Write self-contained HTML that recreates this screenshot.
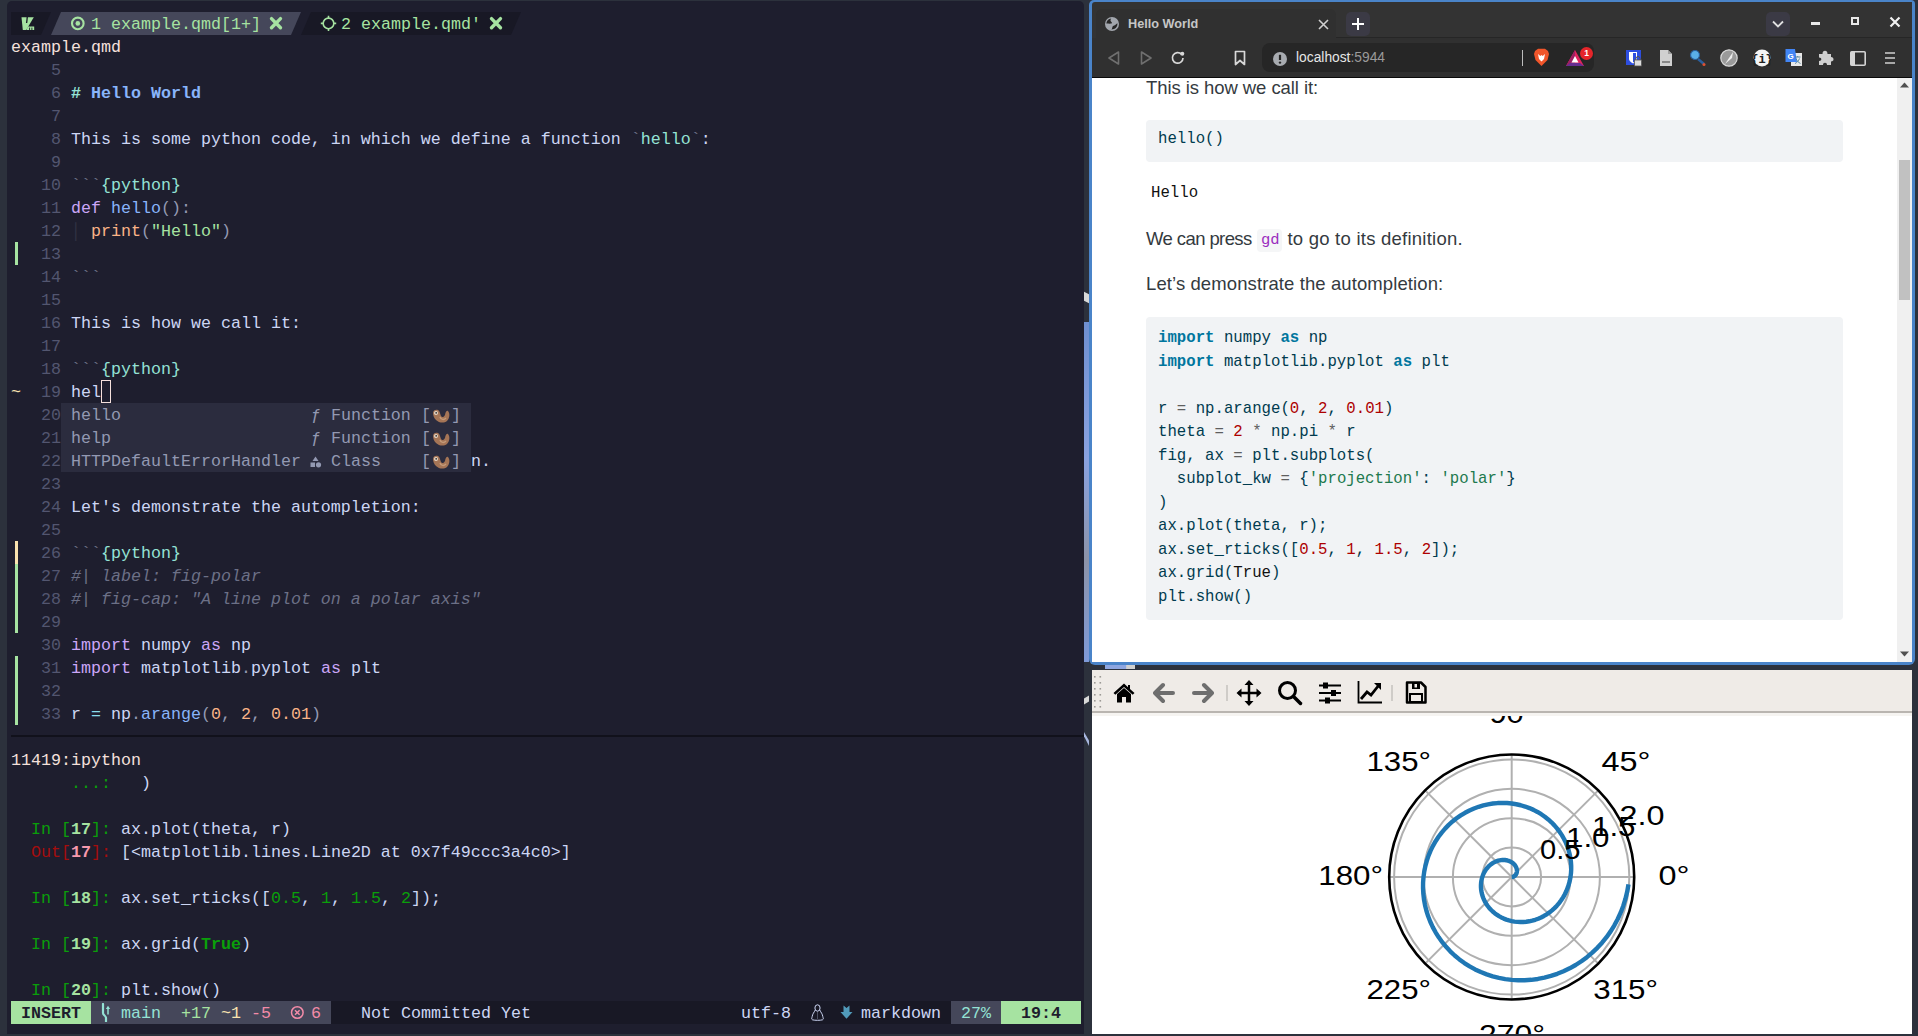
<!DOCTYPE html>
<html><head><meta charset="utf-8"><style>
html,body{margin:0;padding:0;}
body{width:1918px;height:1036px;position:relative;overflow:hidden;background:#2c313c;font-family:"Liberation Sans",sans-serif;}
.r{position:absolute;height:23px;line-height:23px;white-space:pre;font-family:"Liberation Mono",monospace;font-size:16.67px;color:#cdd6f4;}
</style></head><body>
<div id="term" style="position:absolute;left:7px;top:1px;width:1077px;height:1033px;background:#1e1e2e;border-radius:5px 5px 0 0;"></div>
<div style="position:absolute;left:11px;top:12px;width:30px;height:23px;background:#181825;"></div><svg style="position:absolute;left:41px;top:12px" width="10" height="23"><polygon points="0,0 10,0 0,23" fill="#181825"/></svg><svg style="position:absolute;left:51px;top:12px" width="10" height="23"><polygon points="10,0 10,23 0,23" fill="#45475a"/></svg><div style="position:absolute;left:61px;top:12px;width:230px;height:23px;background:#45475a;"></div><svg style="position:absolute;left:291px;top:12px" width="10" height="23"><polygon points="0,0 10,0 0,23" fill="#45475a"/></svg><svg style="position:absolute;left:301px;top:12px" width="10" height="23"><polygon points="10,0 10,23 0,23" fill="#181825"/></svg><div style="position:absolute;left:311px;top:12px;width:200px;height:23px;background:#181825;"></div><svg style="position:absolute;left:511px;top:12px" width="10" height="23"><polygon points="0,0 10,0 0,23" fill="#181825"/></svg><div class="r" style="top:13px;left:91px;"><span style="color:#a6e3a1;">1 example.qmd[1+]</span></div><div class="r" style="top:13px;left:341px;"><span style="color:#a6e3a1;">2 example.qmd&#x27;</span></div><svg style="position:absolute;left:70px;top:16px" width="16" height="16" viewBox="0 0 16 16"><circle cx="7.8" cy="7.4" r="5.8" fill="none" stroke="#a6e3a1" stroke-width="2.1"/><circle cx="7.8" cy="7.4" r="2.3" fill="#a6e3a1"/></svg><svg style="position:absolute;left:320px;top:15px" width="17" height="17" viewBox="0 0 17 17"><circle cx="8.5" cy="8.4" r="5.3" fill="none" stroke="#a6e3a1" stroke-width="1.6"/><path d="M8.5 0.8 V3.2 M8.5 13.6 V16 M0.8 8.4 H3.2 M13.8 8.4 H16.2" stroke="#a6e3a1" stroke-width="1.6"/></svg><svg style="position:absolute;left:269px;top:16px" width="14" height="15" viewBox="0 0 14 15"><path d="M2.5 2.6 L11.5 11.8 M11.5 2.6 L2.5 11.8" stroke="#a6e3a1" stroke-width="3.4" stroke-linecap="round"/></svg><svg style="position:absolute;left:489px;top:16px" width="14" height="15" viewBox="0 0 14 15"><path d="M2.5 2.6 L11.5 11.8 M11.5 2.6 L2.5 11.8" stroke="#a6e3a1" stroke-width="3.4" stroke-linecap="round"/></svg><svg style="position:absolute;left:21px;top:17px" width="14" height="14" viewBox="0 0 14 14"><path d="M0.5 0.3 H12.8 L5.2 13 H1.8 Z" fill="#a6e3a1"/><path d="M6.3 0 L5.6 6" stroke="#181825" stroke-width="1.3"/><path d="M6.8 9.6 H13.2 V13 H5.5 Z" fill="#a6e3a1"/><path d="M8.6 10.6 V13 M10.9 10.6 V13" stroke="#181825" stroke-width="0.9"/></svg><div class="r" style="top:36px;left:11px;"><span style="color:#f5e0dc;">example.qmd</span></div><div class="r" style="top:59px;left:11px;"><span style="color:#535670;">    5 </span></div><div class="r" style="top:82px;left:11px;"><span style="color:#535670;">    6 </span><span style="color:#94e2d5;font-weight:bold"># </span><span style="color:#89b4fa;font-weight:bold">Hello World</span></div><div class="r" style="top:105px;left:11px;"><span style="color:#535670;">    7 </span></div><div class="r" style="top:128px;left:11px;"><span style="color:#535670;">    8 </span><span style="color:#cdd6f4;">This is some python code, in which we define a function </span><span style="color:#6c7086;">`</span><span style="color:#94e2d5;">hello</span><span style="color:#6c7086;">`</span><span style="color:#cdd6f4;">:</span></div><div class="r" style="top:151px;left:11px;"><span style="color:#535670;">    9 </span></div><div class="r" style="top:174px;left:11px;"><span style="color:#535670;">   10 </span><span style="color:#6c7086;">```</span><span style="color:#94e2d5;">{python}</span></div><div class="r" style="top:197px;left:11px;"><span style="color:#535670;">   11 </span><span style="color:#cba6f7;">def</span> <span style="color:#89b4fa;">hello</span><span style="color:#9399b2;">():</span></div><div class="r" style="top:220px;left:11px;"><span style="color:#535670;">   12 </span><span style="color:#313244;">│</span> <span style="color:#fab387;">print</span><span style="color:#9399b2;">(</span><span style="color:#a6e3a1;">&quot;Hello&quot;</span><span style="color:#9399b2;">)</span></div><div class="r" style="top:243px;left:11px;"><span style="color:#535670;">   13 </span></div><div class="r" style="top:266px;left:11px;"><span style="color:#535670;">   14 </span><span style="color:#6c7086;">```</span></div><div class="r" style="top:289px;left:11px;"><span style="color:#535670;">   15 </span></div><div class="r" style="top:312px;left:11px;"><span style="color:#535670;">   16 </span><span style="color:#cdd6f4;">This is how we call it:</span></div><div class="r" style="top:335px;left:11px;"><span style="color:#535670;">   17 </span></div><div class="r" style="top:358px;left:11px;"><span style="color:#535670;">   18 </span><span style="color:#6c7086;">```</span><span style="color:#94e2d5;">{python}</span></div><div class="r" style="top:381px;left:11px;"><span style="color:#535670;">   19 </span><span style="color:#cdd6f4;">hel</span></div><div class="r" style="top:473px;left:11px;"><span style="color:#535670;">   23 </span></div><div class="r" style="top:496px;left:11px;"><span style="color:#535670;">   24 </span><span style="color:#cdd6f4;">Let&#x27;s demonstrate the autompletion:</span></div><div class="r" style="top:519px;left:11px;"><span style="color:#535670;">   25 </span></div><div class="r" style="top:542px;left:11px;"><span style="color:#535670;">   26 </span><span style="color:#6c7086;">```</span><span style="color:#94e2d5;">{python}</span></div><div class="r" style="top:565px;left:11px;"><span style="color:#535670;">   27 </span><span style="color:#6c7086;font-style:italic">#| label: fig-polar</span></div><div class="r" style="top:588px;left:11px;"><span style="color:#535670;">   28 </span><span style="color:#6c7086;font-style:italic">#| fig-cap: &quot;A line plot on a polar axis&quot;</span></div><div class="r" style="top:611px;left:11px;"><span style="color:#535670;">   29 </span></div><div class="r" style="top:634px;left:11px;"><span style="color:#535670;">   30 </span><span style="color:#cba6f7;">import</span><span style="color:#cdd6f4;"> numpy </span><span style="color:#cba6f7;">as</span><span style="color:#cdd6f4;"> np</span></div><div class="r" style="top:657px;left:11px;"><span style="color:#535670;">   31 </span><span style="color:#cba6f7;">import</span><span style="color:#cdd6f4;"> matplotlib</span><span style="color:#9399b2;">.</span><span style="color:#cdd6f4;">pyplot </span><span style="color:#cba6f7;">as</span><span style="color:#cdd6f4;"> plt</span></div><div class="r" style="top:680px;left:11px;"><span style="color:#535670;">   32 </span></div><div class="r" style="top:703px;left:11px;"><span style="color:#535670;">   33 </span><span style="color:#cdd6f4;">r </span><span style="color:#89dceb;">=</span><span style="color:#cdd6f4;"> np</span><span style="color:#9399b2;">.</span><span style="color:#89b4fa;">arange</span><span style="color:#9399b2;">(</span><span style="color:#fab387;">0</span><span style="color:#9399b2;">, </span><span style="color:#fab387;">2</span><span style="color:#9399b2;">, </span><span style="color:#fab387;">0.01</span><span style="color:#9399b2;">)</span></div><div class="r" style="top:450px;left:471px;"><span style="color:#cdd6f4;">n.</span></div><div class="r" style="top:450px;left:11px;"><span style="color:#535670;">   22 </span></div><div class="r" style="top:404px;left:11px;"><span style="color:#535670;">   20 </span></div><div class="r" style="top:427px;left:11px;"><span style="color:#535670;">   21 </span></div><div style="position:absolute;left:15px;top:242px;width:3px;height:23px;background:#a6e3a1;"></div><div style="position:absolute;left:15px;top:541px;width:3px;height:23px;background:#f9e2af;"></div><div style="position:absolute;left:15px;top:564px;width:3px;height:69px;background:#a6e3a1;"></div><div style="position:absolute;left:15px;top:656px;width:3px;height:69px;background:#a6e3a1;"></div><div class="r" style="top:381px;left:11px;"><span style="color:#f9e2af;">~</span></div><div style="position:absolute;left:61px;top:403px;width:410px;height:69px;background:#2b2c3e;"></div><div class="r" style="top:404px;left:71px;"><span style="color:#9399b2;">hello</span>                   <span style="color:#9399b2;">ƒ</span><span style="color:#9399b2;"> Function </span><span style="color:#9399b2;">[</span>  <span style="color:#9399b2;">]</span></div><div class="r" style="top:427px;left:71px;"><span style="color:#9399b2;">help</span>                    <span style="color:#9399b2;">ƒ</span><span style="color:#9399b2;"> Function </span><span style="color:#9399b2;">[</span>  <span style="color:#9399b2;">]</span></div><div class="r" style="top:450px;left:71px;"><span style="color:#9399b2;">HTTPDefaultErrorHandler</span>  <span style="color:#9399b2;"> Class    </span><span style="color:#9399b2;">[</span>  <span style="color:#9399b2;">]</span></div><svg style="position:absolute;left:431px;top:408px" width="20" height="16" viewBox="0 0 20 16"><path d="M2 5 C2 2 5 1 7 2 C9 3 9 6 10 8 C11 10 13 9 14 7 C14.5 5 15 2 17 3 C19 5 19 10 16 13 C13 15.5 8 15 5 12 C3 10 2 7.5 2 5 Z" fill="#a57556"/><circle cx="5" cy="5" r="2" fill="#e8d8c8"/><circle cx="5.2" cy="4.8" r="0.9" fill="#333"/><path d="M9 9 C10 12 13 12 15 10" stroke="#c49a78" stroke-width="1.5" fill="none"/></svg><svg style="position:absolute;left:431px;top:431px" width="20" height="16" viewBox="0 0 20 16"><path d="M2 5 C2 2 5 1 7 2 C9 3 9 6 10 8 C11 10 13 9 14 7 C14.5 5 15 2 17 3 C19 5 19 10 16 13 C13 15.5 8 15 5 12 C3 10 2 7.5 2 5 Z" fill="#a57556"/><circle cx="5" cy="5" r="2" fill="#e8d8c8"/><circle cx="5.2" cy="4.8" r="0.9" fill="#333"/><path d="M9 9 C10 12 13 12 15 10" stroke="#c49a78" stroke-width="1.5" fill="none"/></svg><svg style="position:absolute;left:431px;top:454px" width="20" height="16" viewBox="0 0 20 16"><path d="M2 5 C2 2 5 1 7 2 C9 3 9 6 10 8 C11 10 13 9 14 7 C14.5 5 15 2 17 3 C19 5 19 10 16 13 C13 15.5 8 15 5 12 C3 10 2 7.5 2 5 Z" fill="#a57556"/><circle cx="5" cy="5" r="2" fill="#e8d8c8"/><circle cx="5.2" cy="4.8" r="0.9" fill="#333"/><path d="M9 9 C10 12 13 12 15 10" stroke="#c49a78" stroke-width="1.5" fill="none"/></svg><svg style="position:absolute;left:310px;top:456px" width="12" height="12" viewBox="0 0 12 12"><path d="M5.5 0.5 L8.5 5 H2.5 Z" fill="#9399b2"/><rect x="0.5" y="6.5" width="4.5" height="4.5" fill="#9399b2"/><circle cx="8.5" cy="8.8" r="2.6" fill="#9399b2"/></svg><div style="position:absolute;left:101px;top:380px;width:10px;height:23px;background:transparent;box-sizing:border-box;border:1.5px solid #f5e0dc"></div><div style="position:absolute;left:11px;top:735px;width:1073px;height:2px;background:#11111b;"></div><div class="r" style="top:749px;left:11px;"><span style="color:#f5e0dc;">11419:ipython</span></div><div class="r" style="top:772px;left:11px;">      <span style="color:#0a9f0a;">...:</span><span style="color:#cdd6f4;">   )</span></div><div class="r" style="top:818px;left:11px;">  <span style="color:#0a9f0a;">In [</span><span style="color:#a6e3a1;font-weight:bold">17</span><span style="color:#0a9f0a;">]: </span><span style="color:#cdd6f4;">ax.plot(theta, r)</span></div><div class="r" style="top:841px;left:11px;">  <span style="color:#a50d0d;">Out[</span><span style="color:#f799ad;font-weight:bold">17</span><span style="color:#a50d0d;">]: </span><span style="color:#cdd6f4;">[&lt;matplotlib.lines.Line2D at 0x7f49ccc3a4c0&gt;]</span></div><div class="r" style="top:887px;left:11px;">  <span style="color:#0a9f0a;">In [</span><span style="color:#a6e3a1;font-weight:bold">18</span><span style="color:#0a9f0a;">]: </span><span style="color:#cdd6f4;">ax.set_rticks([</span><span style="color:#0a9f0a;">0.5</span><span style="color:#cdd6f4;">, </span><span style="color:#0a9f0a;">1</span><span style="color:#cdd6f4;">, </span><span style="color:#0a9f0a;">1.5</span><span style="color:#cdd6f4;">, </span><span style="color:#0a9f0a;">2</span><span style="color:#cdd6f4;">]);</span></div><div class="r" style="top:933px;left:11px;">  <span style="color:#0a9f0a;">In [</span><span style="color:#a6e3a1;font-weight:bold">19</span><span style="color:#0a9f0a;">]: </span><span style="color:#cdd6f4;">ax.grid(</span><span style="color:#0a9f0a;font-weight:bold">True</span><span style="color:#cdd6f4;">)</span></div><div class="r" style="top:979px;left:11px;">  <span style="color:#0a9f0a;">In [</span><span style="color:#a6e3a1;font-weight:bold">20</span><span style="color:#0a9f0a;">]: </span><span style="color:#cdd6f4;">plt.show()</span></div><div style="position:absolute;left:11px;top:1001px;width:1070px;height:23px;background:#181825;"></div><div style="position:absolute;left:11px;top:1001px;width:80px;height:23px;background:#a6e3a1;"></div><div style="position:absolute;left:91px;top:1001px;width:240px;height:23px;background:#45475a;"></div><div style="position:absolute;left:951px;top:1001px;width:50px;height:23px;background:#45475a;"></div><div style="position:absolute;left:1001px;top:1001px;width:80px;height:23px;background:#a6e3a1;"></div><div class="r" style="top:1002px;left:21px;"><span style="color:#1e1e2e;font-weight:bold">INSERT</span></div><div class="r" style="top:1002px;left:121px;"><span style="color:#94e2d5;">main</span></div><div class="r" style="top:1002px;left:181px;"><span style="color:#a6e3a1;">+17</span></div><div class="r" style="top:1002px;left:221px;"><span style="color:#f9e2af;">~1</span></div><div class="r" style="top:1002px;left:251px;"><span style="color:#f38ba8;">-5</span></div><div class="r" style="top:1002px;left:311px;"><span style="color:#f38ba8;">6</span></div><svg style="position:absolute;left:290px;top:1005px" width="15" height="15" viewBox="0 0 15 15"><circle cx="7.3" cy="7.5" r="5.8" fill="none" stroke="#f38ba8" stroke-width="1.5"/><path d="M5 5.2 L9.6 9.8 M9.6 5.2 L5 9.8" stroke="#f38ba8" stroke-width="1.5"/></svg><svg style="position:absolute;left:100px;top:1003px" width="11" height="19" viewBox="0 0 11 19"><path d="M3 1 V10 C3 12.5 6 12.5 6 15 V18.5" stroke="#94e2d5" stroke-width="2.2" fill="none" stroke-linecap="round"/><path d="M8 5 V11.5" stroke="#94e2d5" stroke-width="1.5"/><path d="M8 2.8 L5.8 6 H10.2 Z" fill="#94e2d5"/></svg><svg style="position:absolute;left:810px;top:1004px" width="15" height="17" viewBox="0 0 15 17"><ellipse cx="7.5" cy="4" rx="2.6" ry="3.2" fill="none" stroke="#cdd6f4" stroke-width="1"/><path d="M5.3 6 C4 8.5 2.5 10 2.2 12.5 C2 14 1 15 2.5 15.8 C4.5 16.5 10.5 16.5 12.5 15.8 C14 15 13 14 12.8 12.5 C12.5 10 11 8.5 9.7 6" fill="none" stroke="#cdd6f4" stroke-width="1"/><path d="M7.5 7.5 V15" stroke="#cdd6f4" stroke-width="0.6" opacity="0.5"/></svg><svg style="position:absolute;left:840px;top:1005px" width="13" height="15" viewBox="0 0 13 15"><path d="M3.5 0.5 L6.5 3 L9.5 0.5 V7 H12.5 L6.5 13.8 L0.5 7 H3.5 Z" fill="#519aba"/></svg><div class="r" style="top:1002px;left:361px;"><span style="color:#cdd6f4;">Not Committed Yet</span></div><div class="r" style="top:1002px;left:741px;"><span style="color:#cdd6f4;">utf-8</span></div><div class="r" style="top:1002px;left:861px;"><span style="color:#cdd6f4;">markdown</span></div><div class="r" style="top:1002px;left:961px;"><span style="color:#94e2d5;">27%</span></div><div class="r" style="top:1002px;left:1021px;"><span style="color:#1e1e2e;font-weight:bold">19:4</span></div>
<div style="position:absolute;left:1084px;top:322px;width:5px;height:340px;background:linear-gradient(#6f8fd0,#8aa2e0 40%,#8c93a8 70%,#7f9ad8);"></div>
<div style="position:absolute;left:1084px;top:293px;width:5px;height:9px;background:#d8d8d8;transform:skewY(25deg);"></div>
<div style="position:absolute;left:1105px;top:665px;width:30px;height:4px;background:linear-gradient(90deg,#8ea6e0 70%,#d0d0d0 72%);"></div>
<div style="position:absolute;left:1084px;top:697px;width:5px;height:6px;background:#d8d8d8;transform:skewY(-30deg);"></div>
<div style="position:absolute;left:1084px;top:732px;width:5px;height:14px;background:#a9b8e0;clip-path:polygon(0 0,100% 60%,100% 100%,0 30%);"></div>
<div style="position:absolute;left:1089px;top:0px;width:826px;height:665px;background:#4a84c9;border-radius:5px 4px 6px 6px;"></div><div style="position:absolute;left:1092px;top:2px;width:820px;height:660px;background:#333333;border-radius:3px 0 4px 4px;overflow:hidden;"></div><div style="position:absolute;left:1096px;top:9px;width:240px;height:29px;background:#303030;border-radius:6px 6px 0 0;"></div><div style="position:absolute;left:1092px;top:38px;width:820px;height:39px;background:#303030;"></div><div style="position:absolute;left:1336px;top:37px;width:576px;height:1px;background:#262626;"></div><div style="position:absolute;left:1092px;top:77px;width:820px;height:1px;background:#0a0a0a;"></div><svg style="position:absolute;left:1104px;top:16px" width="16" height="16" viewBox="0 0 16 16"><circle cx="8" cy="8" r="7" fill="#a2a6ad"/><path d="M2.3 7.6 C2.5 4.8 4.5 2.8 7.3 2.5 C6.3 3.5 6.2 4.8 7.2 5.8 C8 6.6 8.3 7.2 7.5 7.6 C6 7.9 4 7.6 2.3 7.6 Z" fill="#262626"/><path d="M7.3 13.5 C8.3 12.8 8.2 11.5 8.6 10.5 C9.2 9.8 10.8 9.5 11.8 8.5 C12.4 8 12.9 7.6 13.4 7.3 C13.8 10.8 11 13.6 7.3 13.5 Z" fill="#262626"/></svg><div style="position:absolute;left:1128px;top:16px;font:bold 12.7px 'Liberation Sans',sans-serif;color:#c6c6c6;line-height:16px;">Hello World</div><svg style="position:absolute;left:1318px;top:19px" width="11" height="11" viewBox="0 0 11 11"><path d="M1 1 L10 10 M10 1 L1 10" stroke="#d0d0d0" stroke-width="1.6"/></svg><div style="position:absolute;left:1346px;top:12px;width:24px;height:24px;background:#3b3a45;border-radius:5px;"></div><svg style="position:absolute;left:1351px;top:17px" width="14" height="14" viewBox="0 0 14 14"><path d="M7 1 V13 M1 7 H13" stroke="#fff" stroke-width="2"/></svg><div style="position:absolute;left:1766px;top:12px;width:24px;height:24px;background:#3b3a45;border-radius:5px;"></div><svg style="position:absolute;left:1770px;top:18px" width="16" height="12" viewBox="0 0 16 12"><path d="M3 3.5 L8 8.5 L13 3.5" stroke="#e0e0e0" stroke-width="1.8" fill="none"/></svg><div style="position:absolute;left:1811px;top:22px;width:9px;height:2.5px;background:#e8e8e8;"></div><div style="position:absolute;left:1851px;top:17px;width:8px;height:8px;border:2px solid #e8e8e8;box-sizing:border-box;"></div><svg style="position:absolute;left:1889px;top:16px" width="12" height="12" viewBox="0 0 12 12"><path d="M1.5 1.5 L10.5 10.5 M10.5 1.5 L1.5 10.5" stroke="#f0f0f0" stroke-width="2.2"/></svg><svg style="position:absolute;left:1106px;top:50px" width="16" height="16" viewBox="0 0 16 16"><path d="M12.5 2 L3 8 L12.5 14 Z" stroke="#6f6f6f" stroke-width="1.6" fill="none" stroke-linejoin="round"/></svg><svg style="position:absolute;left:1138px;top:50px" width="16" height="16" viewBox="0 0 16 16"><path d="M3.5 2 L13 8 L3.5 14 Z" stroke="#6f6f6f" stroke-width="1.6" fill="none" stroke-linejoin="round"/></svg><svg style="position:absolute;left:1170px;top:50px" width="16" height="16" viewBox="0 0 16 16"><path d="M13 8 A5.3 5.3 0 1 1 11.5 4.2" stroke="#d8d8d8" stroke-width="1.7" fill="none"/><circle cx="12.3" cy="3.8" r="2" fill="#d8d8d8"/></svg><svg style="position:absolute;left:1232px;top:50px" width="16" height="16" viewBox="0 0 16 16"><path d="M3.5 1.5 H12.5 V14.5 L8 10.5 L3.5 14.5 Z" stroke="#d8d8d8" stroke-width="1.7" fill="none" stroke-linejoin="round"/></svg><div style="position:absolute;left:1262px;top:43px;width:332px;height:29px;background:#262626;border-radius:8px;"></div><svg style="position:absolute;left:1272px;top:51px" width="16" height="16" viewBox="0 0 16 16"><circle cx="8" cy="8" r="7" fill="#a8abb0"/><path d="M8 3.8 V9" stroke="#262626" stroke-width="2.2"/><circle cx="8" cy="11.6" r="1.2" fill="#262626"/></svg><div style="position:absolute;left:1296px;top:49px;font:13.8px 'Liberation Sans',sans-serif;line-height:18px;color:#e6e6e6;white-space:pre;">localhost<span style="color:#9a9a9a">:5944</span></div><div style="position:absolute;left:1522px;top:50px;width:1px;height:16px;background:#bdbdbd;"></div><svg style="position:absolute;left:1533px;top:48px" width="17" height="19" viewBox="0 0 17 19"><path d="M2 3 L5 0.8 H12 L15 3 L16 6 L14.5 12 L8.5 18 L2.5 12 L1 6 Z" fill="#f1562b"/><path d="M5 6 L7.3 8 L8.5 7 L9.7 8 L12 6 L11 11 L8.5 13.5 L6 11 Z" fill="#fff"/></svg><svg style="position:absolute;left:1566px;top:49px" width="20" height="18" viewBox="0 0 20 18"><path d="M9 1 L18 17 H0 Z" fill="#e0245e"/><path d="M0 17 L9 1 L9 17 Z" fill="#9e1f63"/><path d="M0 17 H18 L14 14 H4 Z" fill="#662d91"/><path d="M9 7 L12.5 13.5 H5.5 Z" fill="#fff"/></svg><div style="position:absolute;left:1580px;top:47px;width:13px;height:13px;border-radius:50%;background:#e5252a;color:#fff;font:bold 8.5px 'Liberation Sans',sans-serif;text-align:center;line-height:13px;">1</div><svg style="position:absolute;left:1625px;top:49px" width="18" height="18" viewBox="0 0 18 18"><rect x="1" y="1" width="15" height="15" fill="#2d4ee0"/><path d="M4 3 H12 V10 C12 12 9 14 8 14.5 C7 14 4 12 4 10 Z" fill="#fff"/><path d="M8 4 H11 V10 C11 11.5 9 13 8 13.5 Z" fill="#2d4ee0"/><rect x="9.5" y="11" width="7" height="6" fill="#ddd" stroke="#555" stroke-width="0.8"/><path d="M11 11 V9.5 A2 2 0 0 1 15 9.5 V11" stroke="#555" fill="none"/></svg><svg style="position:absolute;left:1658px;top:49px" width="16" height="18" viewBox="0 0 16 18"><path d="M2 1 H10 L14 5 V17 H2 Z" fill="#d0d0d0"/><path d="M10 1 V5 H14" fill="#a0a0a0"/><rect x="4" y="12" width="8" height="2" fill="#888"/></svg><svg style="position:absolute;left:1689px;top:49px" width="18" height="18" viewBox="0 0 18 18"><circle cx="6" cy="6" r="4.5" fill="#5aaee8" stroke="#2a5f9e" stroke-width="1.2"/><path d="M9 10 L15 15" stroke="#2a5f9e" stroke-width="2.5"/><circle cx="15" cy="15.5" r="1.5" fill="#e05030"/></svg><svg style="position:absolute;left:1720px;top:49px" width="18" height="18" viewBox="0 0 18 18"><circle cx="9" cy="9" r="8.2" fill="#9a9a9a" stroke="#d8d8d8" stroke-width="1.2"/><path d="M5 15 L13 3 L12 9 Z" fill="#eeeeee"/></svg><svg style="position:absolute;left:1753px;top:49px" width="18" height="18" viewBox="0 0 18 18"><circle cx="9" cy="9" r="8.5" fill="#f4f4f4"/><text x="9" y="13.5" font-family="Liberation Mono" font-size="12" font-weight="bold" text-anchor="middle" fill="#222">{i}</text></svg><svg style="position:absolute;left:1785px;top:48px" width="18" height="19" viewBox="0 0 18 19"><rect x="6" y="5" width="11" height="13" fill="#e8e8e8"/><path d="M0.5 1 H10 L12 14 H0.5 Z" fill="#4285f4"/><text x="5.5" y="10.5" font-family="Liberation Sans" font-size="8" font-weight="bold" text-anchor="middle" fill="#fff">G</text><path d="M10 9 H15.5 M12.7 8 V9 M11 10.5 C12 13 13.5 14.5 15.5 15.5 M14.5 10.5 C13.5 13 12 14.5 10 15.5" stroke="#4a7f9a" stroke-width="0.9" fill="none"/></svg><svg style="position:absolute;left:1818px;top:50px" width="16" height="16" viewBox="0 0 16 16"><path d="M1 4 H4.5 C4.5 2 5.5 0.8 7 0.8 C8.5 0.8 9.5 2 9.5 4 H13 V7 C14.8 7 15.5 8 15.5 9.3 C15.5 10.6 14.8 11.5 13 11.5 V15 H9 C9 13.5 8.2 12.8 7 12.8 C5.8 12.8 5 13.5 5 15 H1 V11 C2.6 11 3.3 10.2 3.3 9.3 C3.3 8.3 2.6 7.5 1 7.5 Z" fill="#cfcfcf"/></svg><svg style="position:absolute;left:1850px;top:51px" width="16" height="15" viewBox="0 0 16 15"><rect x="0.8" y="0.8" width="14.4" height="13.4" rx="1" fill="none" stroke="#d4d4d4" stroke-width="1.6"/><rect x="0.8" y="0.8" width="4.2" height="13.4" fill="#d4d4d4"/></svg><svg style="position:absolute;left:1885px;top:50px" width="10" height="16" viewBox="0 0 10 16"><path d="M0 3 H10 M0 8 H10 M0 13 H10" stroke="#cfcfcf" stroke-width="1.7"/></svg><div style="position:absolute;left:1092px;top:78px;width:805px;height:584px;background:#fff;overflow:hidden;"><div style="font-family:'Liberation Sans',sans-serif;font-size:18.5px;color:#343a40;position:absolute;white-space:pre;line-height:24px;left:54px;top:-2px;letter-spacing:-0.07px;">This is how we call it:</div><div style="position:absolute;left:54px;top:42px;width:697px;height:42px;background:#f1f3f5;border-radius:4px;"></div><div style="font-family:'Liberation Mono',monospace;position:absolute;white-space:pre;left:66px;top:50px;font-size:15.7px;line-height:23.5px;color:#003b4f;">hello()</div><div style="font-family:'Liberation Mono',monospace;position:absolute;white-space:pre;left:59px;top:104px;font-size:15.7px;line-height:23.5px;color:#111;">Hello</div><div style="font-family:'Liberation Sans',sans-serif;font-size:18.5px;color:#343a40;position:absolute;white-space:pre;line-height:24px;left:54px;top:149px;letter-spacing:-0.59px;">We can press</div><div style="font-family:'Liberation Sans',sans-serif;font-size:18.5px;color:#343a40;position:absolute;white-space:pre;line-height:24px;left:195.4000000000001px;top:149px;letter-spacing:0.24px;">to go to its definition.</div><div style="position:absolute;left:164.5px;top:151px;width:25px;height:23px;background:#f5f6f7;border-radius:4px;"></div><div style="font-family:'Liberation Mono',monospace;position:absolute;white-space:pre;left:169px;top:151px;font-size:15.5px;line-height:23px;color:#9a2cbf;">gd</div><div style="font-family:'Liberation Sans',sans-serif;font-size:18.5px;color:#343a40;position:absolute;white-space:pre;line-height:24px;left:54px;top:194px;letter-spacing:0.1px;">Let’s demonstrate the autompletion:</div><div style="position:absolute;left:54px;top:239px;width:697px;height:303px;background:#f1f3f5;border-radius:4px;"></div><div style="font-family:'Liberation Mono',monospace;position:absolute;white-space:pre;left:66px;top:249px;font-size:15.7px;line-height:23.55px;color:#003b4f;"><span style="color:#00769e;font-weight:bold">import</span> numpy <span style="color:#00769e;font-weight:bold">as</span> np
<span style="color:#00769e;font-weight:bold">import</span> matplotlib.pyplot <span style="color:#00769e;font-weight:bold">as</span> plt

r <span style="color:#5e5e5e">=</span> np.arange(<span style="color:#ad0000">0</span>, <span style="color:#ad0000">2</span>, <span style="color:#ad0000">0.01</span>)
theta <span style="color:#5e5e5e">=</span> <span style="color:#ad0000">2</span> <span style="color:#5e5e5e">*</span> np.pi <span style="color:#5e5e5e">*</span> r
fig, ax <span style="color:#5e5e5e">=</span> plt.subplots(
  subplot_kw <span style="color:#5e5e5e">=</span> {<span style="color:#20794d">'projection'</span>: <span style="color:#20794d">'polar'</span>}
)
ax.plot(theta, r);
ax.set_rticks([<span style="color:#ad0000">0.5</span>, <span style="color:#ad0000">1</span>, <span style="color:#ad0000">1.5</span>, <span style="color:#ad0000">2</span>]);
ax.grid(<span style="color:#111">True</span>)
plt.show()</div></div><div style="position:absolute;left:1897px;top:78px;width:15px;height:584px;background:#f0f0f0;"></div><div style="position:absolute;left:1899px;top:160px;width:11px;height:140px;background:#c1c1c1;"></div><svg style="position:absolute;left:1899px;top:81px" width="11" height="8"><path d="M1 6.5 L5.5 1.5 L10 6.5 Z" fill="#505050"/></svg><svg style="position:absolute;left:1899px;top:650px" width="11" height="8"><path d="M1 1.5 L5.5 6.5 L10 1.5 Z" fill="#505050"/></svg>
<div style="position:absolute;left:1092px;top:670px;width:820px;height:364px;background:#fff;"></div><div style="position:absolute;left:1092px;top:670px;width:820px;height:41px;background:#efebe7;"></div><div style="position:absolute;left:1092px;top:711px;width:820px;height:2px;background:#b9b5b0;"></div><div style="position:absolute;left:1092px;top:713px;width:820px;height:3px;background:#f6f4f1;"></div><svg style="position:absolute;left:1093px;top:676px" width="10" height="34"><rect x="1" y="0" width="1.6" height="1.6" fill="#9c9a96"/><rect x="1" y="6" width="1.6" height="1.6" fill="#9c9a96"/><rect x="1" y="12" width="1.6" height="1.6" fill="#9c9a96"/><rect x="1" y="18" width="1.6" height="1.6" fill="#9c9a96"/><rect x="1" y="24" width="1.6" height="1.6" fill="#9c9a96"/><rect x="1" y="30" width="1.6" height="1.6" fill="#9c9a96"/><rect x="6.5" y="0" width="1.6" height="1.6" fill="#9c9a96"/><rect x="6.5" y="6" width="1.6" height="1.6" fill="#9c9a96"/><rect x="6.5" y="12" width="1.6" height="1.6" fill="#9c9a96"/><rect x="6.5" y="18" width="1.6" height="1.6" fill="#9c9a96"/><rect x="6.5" y="24" width="1.6" height="1.6" fill="#9c9a96"/><rect x="6.5" y="30" width="1.6" height="1.6" fill="#9c9a96"/></svg><svg style="position:absolute;left:1112px;top:682px" width="24" height="22" viewBox="0 0 24 22"><path d="M12 1.5 L1.5 11 L3.3 12.8 L12 5 L20.7 12.8 L22.5 11 L18 7 V3 H16 V5.2 Z" fill="#000"/><path d="M5 12 L12 6 L19 12 V20.5 H14 V15 H10 V20.5 H5 Z" fill="#000"/></svg><svg style="position:absolute;left:1153px;top:682px" width="22" height="22" viewBox="0 0 22 22"><path d="M2 11 L10 3 M2 11 L10 19 M3 11 H20" stroke="#6e6e6e" stroke-width="4" stroke-linecap="round" fill="none"/></svg><svg style="position:absolute;left:1192px;top:682px" width="22" height="22" viewBox="0 0 22 22"><path d="M20 11 L12 3 M20 11 L12 19 M19 11 H2" stroke="#6e6e6e" stroke-width="4" stroke-linecap="round" fill="none"/></svg><div style="position:absolute;left:1226px;top:685px;width:1.5px;height:16px;background:#cfccc8;"></div><svg style="position:absolute;left:1236px;top:679px" width="26" height="28" viewBox="0 0 26 28"><path d="M13 3 V25 M2 14 H24" stroke="#000" stroke-width="2.5"/><path d="M13 1 L8.5 6 H17.5 Z M13 27 L8.5 22 H17.5 Z M0.5 14 L5.5 9.5 V18.5 Z M25.5 14 L20.5 9.5 V18.5 Z" fill="#000"/></svg><svg style="position:absolute;left:1277px;top:680px" width="26" height="26" viewBox="0 0 26 26"><circle cx="10.5" cy="10.5" r="8" stroke="#000" stroke-width="3" fill="none"/><path d="M16.5 16.5 L23.5 23.5" stroke="#000" stroke-width="3.5" stroke-linecap="round"/></svg><svg style="position:absolute;left:1318px;top:682px" width="24" height="22" viewBox="0 0 24 22"><path d="M1 3.5 H23 M1 11 H23 M1 18.5 H23" stroke="#000" stroke-width="2"/><rect x="5" y="0.5" width="5" height="6" fill="#000"/><rect x="13" y="8" width="5" height="6" fill="#000"/><rect x="7" y="15.5" width="5" height="6" fill="#000"/></svg><svg style="position:absolute;left:1357px;top:680px" width="26" height="24" viewBox="0 0 26 24"><path d="M1.5 1 V22.5 H25" stroke="#000" stroke-width="1.8" fill="none"/><path d="M4 19 L10 12 L14 15 L22 5" stroke="#000" stroke-width="2.8" fill="none"/><path d="M17 3 H24 V10 Z" fill="#000"/></svg><div style="position:absolute;left:1391px;top:685px;width:1.5px;height:16px;background:#cfccc8;"></div><svg style="position:absolute;left:1405px;top:681px" width="22" height="23" viewBox="0 0 22 23"><path d="M2 1.5 H16 L20.5 6 V21.5 H2 Z" stroke="#000" stroke-width="2.5" fill="none" stroke-linejoin="round"/><rect x="7" y="2" width="8" height="6" fill="#000"/><rect x="9.5" y="3" width="2.5" height="3.5" fill="#efebe7"/><rect x="5" y="13" width="12" height="8" fill="none" stroke="#000" stroke-width="2"/></svg><svg style="position:absolute;left:1092px;top:716px" width="820" height="318" viewBox="1092 716 820 318"><circle cx="1511.7" cy="877.0" r="29.40" fill="none" stroke="#b0b0b0" stroke-width="2"/><circle cx="1511.7" cy="877.0" r="58.80" fill="none" stroke="#b0b0b0" stroke-width="2"/><circle cx="1511.7" cy="877.0" r="88.20" fill="none" stroke="#b0b0b0" stroke-width="2"/><circle cx="1511.7" cy="877.0" r="117.60" fill="none" stroke="#b0b0b0" stroke-width="2"/><line x1="1511.7" y1="877.0" x2="1634.20" y2="877.00" stroke="#b0b0b0" stroke-width="2"/><line x1="1511.7" y1="877.0" x2="1598.32" y2="790.38" stroke="#b0b0b0" stroke-width="2"/><line x1="1511.7" y1="877.0" x2="1511.70" y2="754.50" stroke="#b0b0b0" stroke-width="2"/><line x1="1511.7" y1="877.0" x2="1425.08" y2="790.38" stroke="#b0b0b0" stroke-width="2"/><line x1="1511.7" y1="877.0" x2="1389.20" y2="877.00" stroke="#b0b0b0" stroke-width="2"/><line x1="1511.7" y1="877.0" x2="1425.08" y2="963.62" stroke="#b0b0b0" stroke-width="2"/><line x1="1511.7" y1="877.0" x2="1511.70" y2="999.50" stroke="#b0b0b0" stroke-width="2"/><line x1="1511.7" y1="877.0" x2="1598.32" y2="963.62" stroke="#b0b0b0" stroke-width="2"/><polyline points="1511.70,877.00 1512.29,876.96 1512.87,876.85 1513.43,876.67 1513.98,876.42 1514.50,876.09 1514.98,875.70 1515.42,875.25 1515.82,874.73 1516.17,874.16 1516.46,873.54 1516.68,872.88 1516.84,872.17 1516.93,871.43 1516.95,870.66 1516.88,869.86 1516.74,869.06 1516.52,868.24 1516.21,867.42 1515.81,866.61 1515.33,865.82 1514.77,865.04 1514.12,864.29 1513.40,863.58 1512.59,862.92 1511.70,862.30 1510.74,861.74 1509.71,861.25 1508.61,860.83 1507.46,860.48 1506.25,860.22 1504.99,860.05 1503.69,859.97 1502.35,860.00 1500.99,860.12 1499.60,860.35 1498.21,860.69 1496.81,861.14 1495.41,861.70 1494.03,862.38 1492.67,863.18 1491.34,864.08 1490.06,865.10 1488.82,866.23 1487.64,867.48 1486.54,868.82 1485.50,870.27 1484.55,871.82 1483.70,873.46 1482.94,875.19 1482.30,877.00 1481.77,878.88 1481.37,880.83 1481.09,882.84 1480.95,884.90 1480.94,886.99 1481.08,889.12 1481.37,891.27 1481.81,893.43 1482.41,895.59 1483.16,897.74 1484.06,899.86 1485.12,901.96 1486.34,904.00 1487.71,906.00 1489.23,907.92 1490.91,909.77 1492.72,911.52 1494.68,913.18 1496.76,914.72 1498.98,916.15 1501.32,917.44 1503.77,918.59 1506.32,919.59 1508.97,920.43 1511.70,921.10 1514.51,921.60 1517.37,921.92 1520.29,922.05 1523.25,921.99 1526.24,921.74 1529.23,921.28 1532.23,920.63 1535.21,919.77 1538.17,918.70 1541.08,917.43 1543.93,915.96 1546.72,914.29 1549.42,912.42 1552.02,910.36 1554.51,908.11 1556.88,905.67 1559.10,903.06 1561.18,900.28 1563.09,897.35 1564.83,894.26 1566.37,891.04 1567.73,887.69 1568.87,884.22 1569.80,880.66 1570.50,877.00 1570.97,873.27 1571.20,869.48 1571.19,865.65 1570.93,861.79 1570.42,857.92 1569.65,854.06 1568.63,850.21 1567.35,846.41 1565.81,842.66 1564.03,838.98 1561.99,835.40 1559.71,831.92 1557.18,828.56 1554.43,825.35 1551.45,822.29 1548.25,819.41 1544.84,816.71 1541.24,814.22 1537.46,811.94 1533.50,809.89 1529.39,808.09 1525.14,806.53 1520.76,805.25 1516.28,804.23 1511.70,803.50 1507.05,803.06 1502.34,802.91 1497.60,803.07 1492.84,803.53 1488.08,804.30 1483.34,805.38 1478.65,806.77 1474.02,808.47 1469.48,810.47 1465.04,812.78 1460.73,815.38 1456.56,818.28 1452.55,821.45 1448.72,824.90 1445.10,828.61 1441.70,832.58 1438.53,836.78 1435.62,841.20 1432.97,845.83 1430.61,850.65 1428.55,855.65 1426.80,860.80 1425.36,866.09 1424.26,871.50 1423.50,877.00 1423.09,882.58 1423.03,888.20 1423.33,893.86 1423.99,899.52 1425.02,905.16 1426.41,910.77 1428.17,916.31 1430.29,921.76 1432.76,927.10 1435.59,932.30 1438.76,937.34 1442.26,942.21 1446.09,946.87 1450.23,951.30 1454.67,955.49 1459.40,959.41 1464.39,963.05 1469.64,966.38 1475.12,969.39 1480.81,972.07 1486.69,974.39 1492.75,976.34 1498.95,977.92 1505.28,979.11 1511.70,979.90 1518.20,980.28 1524.74,980.26 1531.31,979.81 1537.88,978.95 1544.41,977.66 1550.88,975.95 1557.27,973.83 1563.54,971.29 1569.67,968.35 1575.64,965.00 1581.41,961.27 1586.97,957.15 1592.28,952.67 1597.33,947.84 1602.08,942.67 1606.52,937.18 1610.63,931.39 1614.38,925.32 1617.76,918.99 1620.75,912.43 1623.33,905.66 1625.48,898.71 1627.21,891.59 1628.48,884.35" fill="none" stroke="#1f77b4" stroke-width="4.4" stroke-linecap="butt" stroke-linejoin="round"/><circle cx="1511.7" cy="877.0" r="122.5" fill="none" stroke="#000" stroke-width="2.6"/><text x="1366.5" y="771" font-family="Liberation Sans" font-size="28.5" textLength="64.5" lengthAdjust="spacingAndGlyphs" fill="#000">135°</text><text x="1601.5" y="771" font-family="Liberation Sans" font-size="28.5" textLength="49.0" lengthAdjust="spacingAndGlyphs" fill="#000">45°</text><text x="1318.3" y="884.8" font-family="Liberation Sans" font-size="28.5" textLength="64.70000000000005" lengthAdjust="spacingAndGlyphs" fill="#000">180°</text><text x="1658.5" y="884.8" font-family="Liberation Sans" font-size="28.5" textLength="31.0" lengthAdjust="spacingAndGlyphs" fill="#000">0°</text><text x="1366.5" y="998.75" font-family="Liberation Sans" font-size="28.5" textLength="64.5" lengthAdjust="spacingAndGlyphs" fill="#000">225°</text><text x="1593.3" y="998.75" font-family="Liberation Sans" font-size="28.5" textLength="64.70000000000005" lengthAdjust="spacingAndGlyphs" fill="#000">315°</text><text x="1489.5" y="723" font-family="Liberation Sans" font-size="28.5" textLength="46.5" lengthAdjust="spacingAndGlyphs" fill="#000">90°</text><text x="1479" y="1044" font-family="Liberation Sans" font-size="28.5" textLength="66" lengthAdjust="spacingAndGlyphs" fill="#000">270°</text><text x="1540" y="858.7" font-family="Liberation Sans" font-size="28.5" textLength="40.5" lengthAdjust="spacingAndGlyphs" fill="#000">0.5</text><text x="1566" y="847" font-family="Liberation Sans" font-size="28.5" textLength="43.5" lengthAdjust="spacingAndGlyphs" fill="#000">1.0</text><text x="1592" y="836" font-family="Liberation Sans" font-size="28.5" textLength="43.5" lengthAdjust="spacingAndGlyphs" fill="#000">1.5</text><text x="1619.5" y="825.2" font-family="Liberation Sans" font-size="28.5" textLength="45.0" lengthAdjust="spacingAndGlyphs" fill="#000">2.0</text></svg>
</body></html>
